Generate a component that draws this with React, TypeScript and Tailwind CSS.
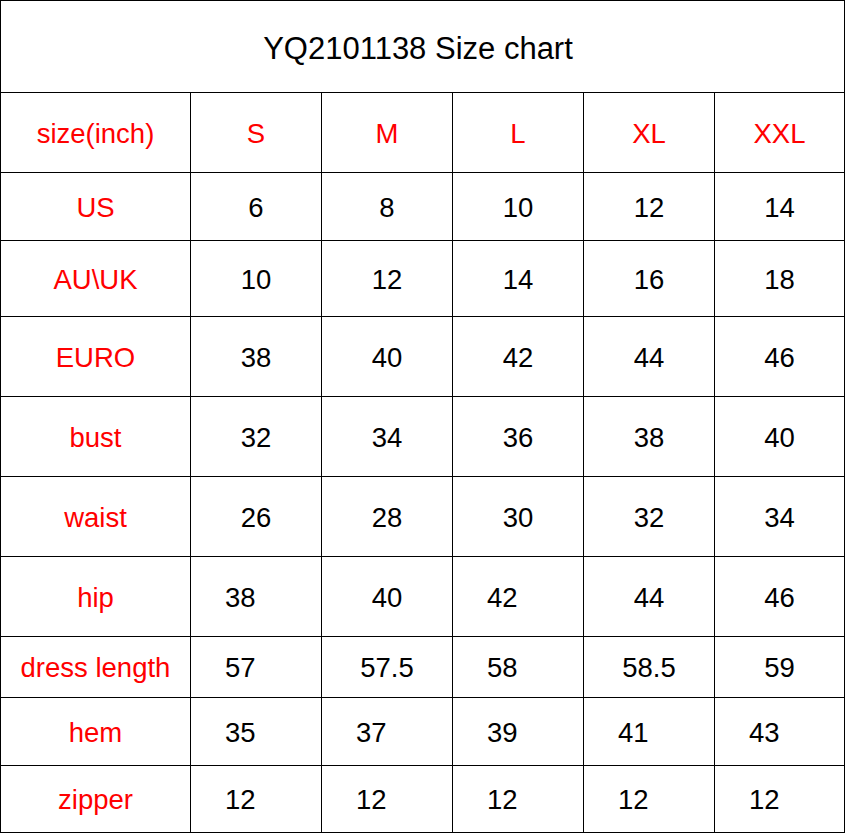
const columns = ["S", "M", "L", "XL", "XXL"];

type Cell = { v: string; left?: boolean };

type Row = { label: string; h: string; cells: Cell[] };

const c = (v: string): Cell => ({ v });
const l = (v: string): Cell => ({ v, left: true });

const rows: Row[] = [
  { label: "US", h: "h-[68px]", cells: ["6", "8", "10", "12", "14"].map(c) },
  { label: "AU\\UK", h: "h-[76px]", cells: ["10", "12", "14", "16", "18"].map(c) },
  { label: "EURO", h: "h-[80px]", cells: ["38", "40", "42", "44", "46"].map(c) },
  { label: "bust", h: "h-[80px]", cells: ["32", "34", "36", "38", "40"].map(c) },
  { label: "waist", h: "h-[80px]", cells: ["26", "28", "30", "32", "34"].map(c) },
  { label: "hip", h: "h-[80px]", cells: [l("38"), c("40"), l("42"), c("44"), c("46")] },
  { label: "dress length", h: "h-[61px]", cells: [l("57"), c("57.5"), l("58"), c("58.5"), c("59")] },
  { label: "hem", h: "h-[68px]", cells: ["35", "37", "39", "41", "43"].map(l) },
  { label: "zipper", h: "h-[67px]", cells: ["12", "12", "12", "12", "12"].map(l) },
];

export default function App() {
  return (
    <div className="min-h-screen bg-white" style={{ fontFamily: "'Liberation Sans', Arial, sans-serif" }}>
      <div className="w-[845px] border-l border-t border-black grid grid-cols-[190px_131px_131px_131px_131px_130px] text-[27.5px] leading-none">
        {/* title */}
        <div className="col-span-6 h-[92px] pt-[3px] pr-[9px] border-r border-b border-black flex items-center justify-center text-[31px] text-black">
          YQ2101138 Size chart
        </div>

        {/* size header */}
        <div className="h-[80px] pt-[2px] border-r border-b border-black flex items-center justify-center text-[#ff0000]">
          size(inch)
        </div>
        {columns.map((s) => (
          <div key={s} className="h-[80px] pt-[2px] border-r border-b border-black flex items-center justify-center text-[#ff0000]">
            {s}
          </div>
        ))}

        {rows.map((row) => (
          <div key={row.label} className="contents">
            <div className={`${row.h} pt-[2px] border-r border-b border-black flex items-center justify-center text-[#ff0000]`}>
              {row.label}
            </div>
            {row.cells.map((cell, i) => (
              <div
                key={i}
                className={
                  cell.left
                    ? `${row.h} pt-[2px] border-r border-b border-black flex items-center justify-start pl-[34px] text-black`
                    : `${row.h} pt-[2px] border-r border-b border-black flex items-center justify-center text-black`
                }
              >
                {cell.v}
              </div>
            ))}
          </div>
        ))}
      </div>
    </div>
  );
}
